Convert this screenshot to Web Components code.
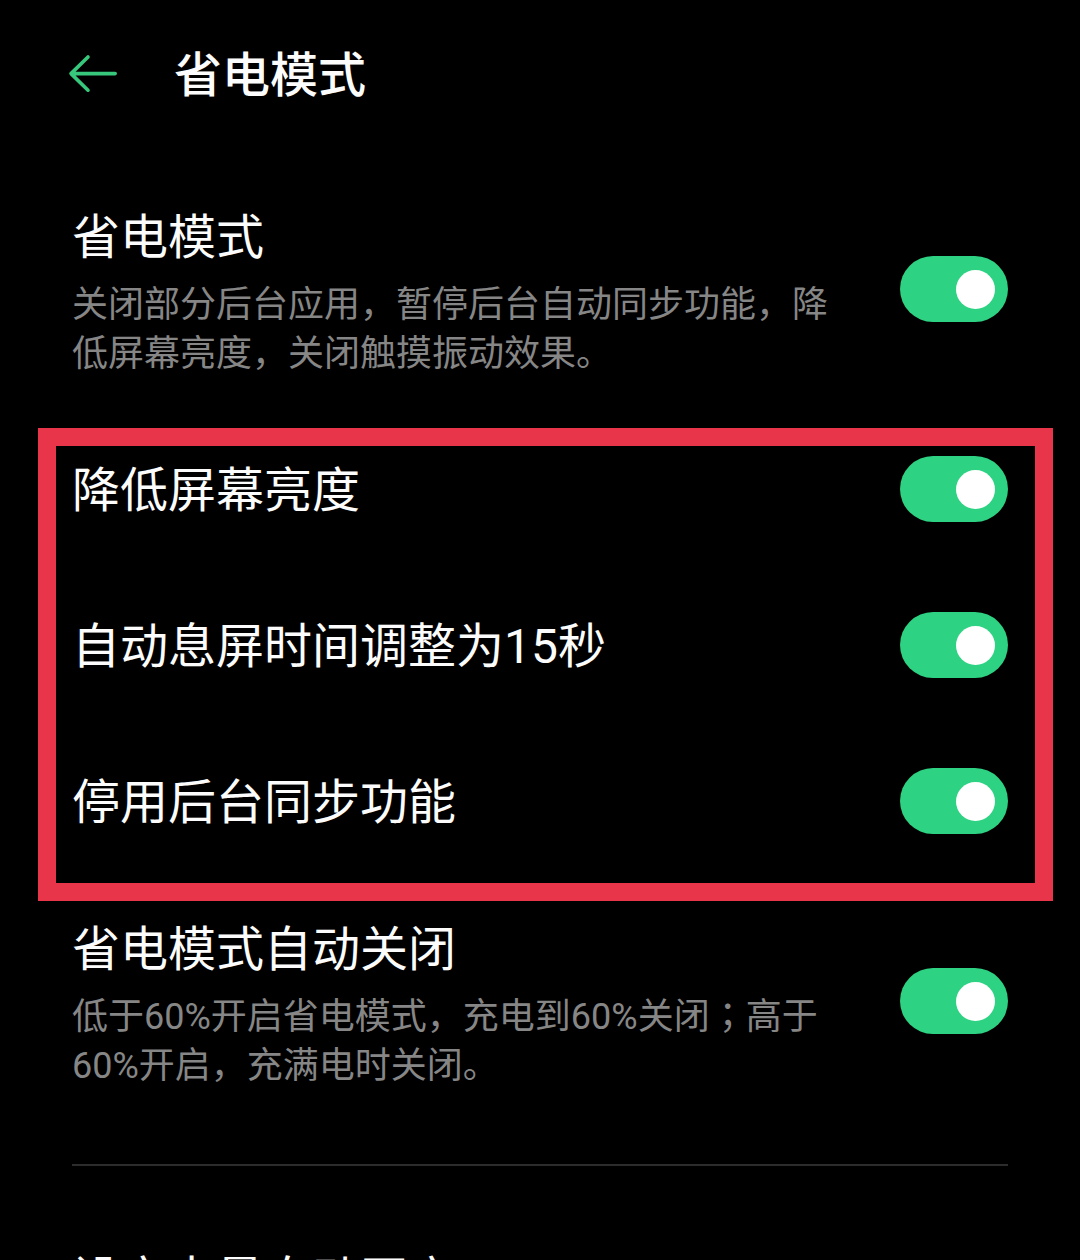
<!DOCTYPE html>
<html lang="zh-CN">
<head>
<meta charset="utf-8">
<meta name="viewport" content="width=device-width, initial-scale=1">
<title>省电模式</title>
<style>
  body {
    margin: 0;
    background: #000;
    color: #fcfcfc;
    font-family: Roboto, "Noto Sans CJK SC", sans-serif;
  }
  .centered-mark { font-family: "Noto Sans CJK TC", sans-serif; line-height: 1; }
</style>
</head>
<body>
<settings-page>
  <page-header slot="header">省电模式</page-header>
  <setting-row>省电模式<span slot="description">关闭部分后台应用，暂停后台自动同步功能，降低屏幕亮度，关闭触摸振动效果。</span></setting-row>
  <highlight-group>
    <setting-row compact>降低屏幕亮度</setting-row>
    <setting-row compact>自动息屏时间调整为15秒</setting-row>
    <setting-row compact>停用后台同步功能</setting-row>
  </highlight-group>
  <setting-row>省电模式自动关闭<span slot="description">低于60%开启省电模式，充电到60%关闭<span class="centered-mark" lang="zh-TW">；</span>高于60%开启，充满电时关闭。</span></setting-row>
  <section-divider></section-divider>
  <setting-link>设定电量自动开启</setting-link>
</settings-page>

<template id="settings-page">
  <style>
    :host { display: flex; flex-direction: column; height: 100vh; overflow: hidden; }
    main { display: flex; flex-direction: column; padding-top: 51px; }
  </style>
  <slot name="header"></slot>
  <main><slot></slot></main>
</template>

<template id="page-header">
  <style>
    :host { display: block; flex: none; }
    header { display: flex; align-items: center; gap: 56px; height: 148px; padding: 0 68px; box-sizing: border-box; }
    button { flex: none; width: 50px; height: 40px; padding: 0; border: 0; background: none; cursor: pointer; }
    svg { display: block; }
    h1 { margin: 0; padding-top: 4px; font-size: 48px; line-height: 78px; font-weight: 500; }
  </style>
  <header>
    <button type="button" aria-label="返回">
      <svg width="50" height="40" viewBox="0 0 50 40" fill="none" stroke="#37c87c" stroke-width="3.6" stroke-linecap="round" stroke-linejoin="round"><path d="M20 3 3 19.6 20 36.2M3 19.6H47.2"/></svg>
    </button>
    <h1><slot></slot></h1>
  </header>
</template>

<template id="toggle-row">
  <style>
    :host { display: block; padding: 0 72px; }
    :host([compact]) { padding: 0; }
    .row { display: flex; align-items: center; justify-content: space-between; gap: 48px; }
    .text { flex: 1; min-width: 0; }
    label { display: block; padding-bottom: 4px; font-size: 48px; line-height: 78px; }
    :host([compact]) label { padding: 4px 0 0; line-height: 66px; }
    .description { color: #868686; font-size: 36px; line-height: 49px; }
    input {
      appearance: none; flex: none; display: flex; align-items: center; justify-content: flex-start;
      box-sizing: border-box; width: 108px; height: 66px; margin: 0; padding: 0 13px;
      border-radius: 33px; background: #444; cursor: pointer;
    }
    input:checked { background: #2dd282; justify-content: flex-end; }
    input::before { content: ""; width: 39px; height: 39px; border-radius: 50%; background: #fff; }
  </style>
  <div class="row">
    <div class="text">
      <label for="toggle"><slot></slot></label>
      <div class="description" id="description"><slot name="description"></slot></div>
    </div>
    <input type="checkbox" role="switch" id="toggle" aria-describedby="description" checked>
  </div>
</template>

<template id="highlight-group">
  <style>
    :host { display: block; margin: 49px 27px 10px 38px; }
    .frame { display: flex; flex-direction: column; gap: 86px; padding: 8px 27px 47px 16px; border: 18px solid #e93549; }
  </style>
  <div class="frame"><slot></slot></div>
</template>

<template id="section-divider">
  <style>
    :host { display: block; padding: 73px 72px 75px; }
    hr { margin: 0; border: 0; height: 2px; background: #2c2c2c; }
  </style>
  <hr>
</template>

<template id="setting-link">
  <style>
    :host { display: block; padding: 0 72px; }
    a { display: block; color: inherit; text-decoration: none; font-size: 48px; line-height: 78px; }
  </style>
  <a href="#auto"><slot></slot></a>
</template>

<script>
  class TemplateElement extends HTMLElement {
    constructor() {
      super();
      const template = document.getElementById(this.constructor.template);
      this.attachShadow({ mode: "open" }).append(template.content.cloneNode(true));
    }
  }
  class SettingsPage extends TemplateElement { static template = "settings-page"; }
  class PageHeader extends TemplateElement { static template = "page-header"; }
  class SettingRow extends TemplateElement { static template = "toggle-row"; }
  class HighlightGroup extends TemplateElement { static template = "highlight-group"; }
  class SectionDivider extends TemplateElement { static template = "section-divider"; }
  class SettingLink extends TemplateElement { static template = "setting-link"; }

  customElements.define("settings-page", SettingsPage);
  customElements.define("page-header", PageHeader);
  customElements.define("setting-row", SettingRow);
  customElements.define("highlight-group", HighlightGroup);
  customElements.define("section-divider", SectionDivider);
  customElements.define("setting-link", SettingLink);
</script>
</body>
</html>
